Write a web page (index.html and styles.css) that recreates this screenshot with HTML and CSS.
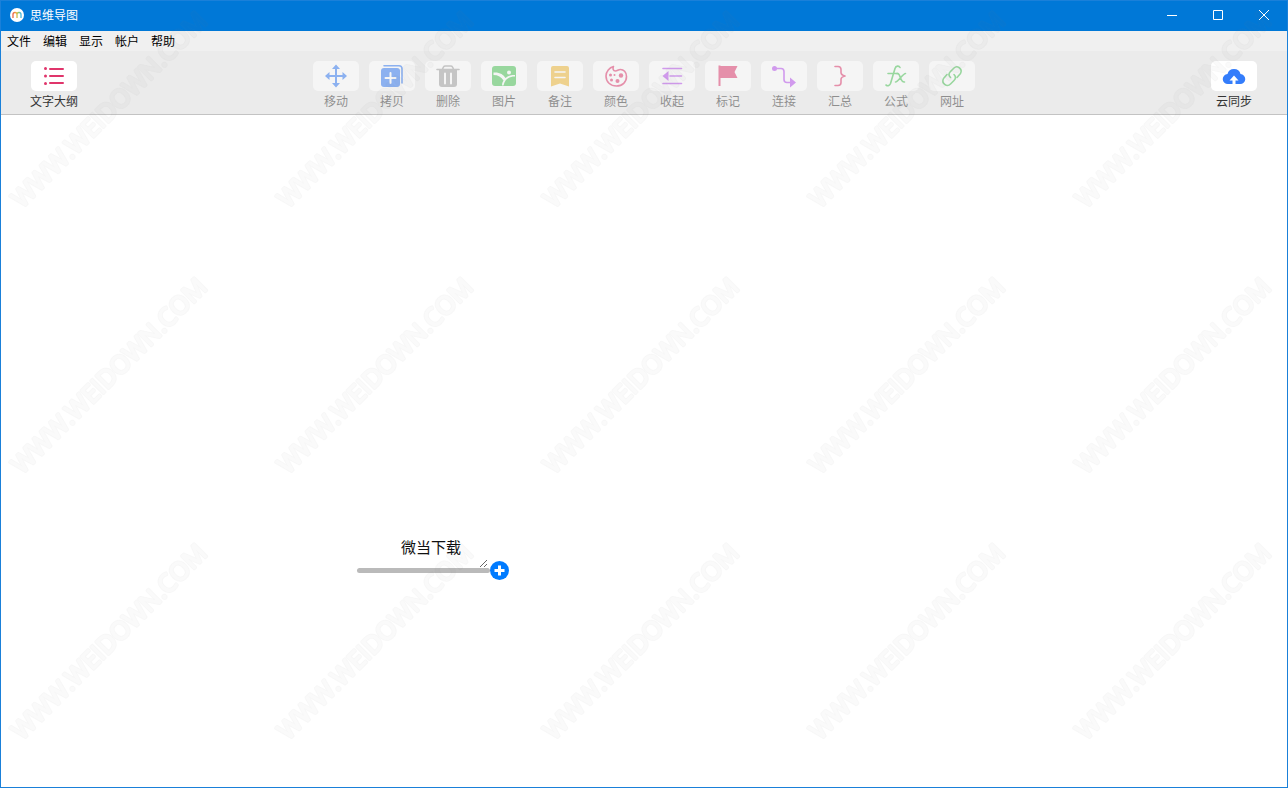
FILE: index.html
```html
<!DOCTYPE html>
<html lang="zh-CN">
<head>
<meta charset="utf-8">
<title>思维导图</title>
<link rel="stylesheet" href="styles.css">
</head>
<body>
<div class="window">
  <header class="titlebar">
    <svg class="logo" viewBox="0 0 14 14" aria-hidden="true">
      <defs>
        <linearGradient id="rainbow">
          <stop offset="0" stop-color="#e8604c"/>
          <stop offset=".4" stop-color="#f3b13c"/>
          <stop offset=".7" stop-color="#8acb6a"/>
          <stop offset="1" stop-color="#3fb4e8"/>
        </linearGradient>
      </defs>
      <circle cx="7" cy="7" r="7" fill="#fff"/>
      <path d="M3 10V6.500a2 2 0 0 1 4 0V10M7 10V6.500a2 2 0 0 1 4 0V10" fill="none" stroke="url(#rainbow)" stroke-width="1.300"/>
    </svg>
    <h1 class="title">思维导图</h1>
    <div class="controls">
      <button class="control" aria-label="最小化"><svg viewBox="0 0 12 12"><path d="M1 6.500h10"/></svg></button>
      <button class="control" aria-label="最大化"><svg viewBox="0 0 12 12"><path d="M1.500 1.500h9v9h-9z"/></svg></button>
      <button class="control" aria-label="关闭"><svg viewBox="0 0 12 12"><path d="M1 1l10 10M11 1L1 11"/></svg></button>
    </div>
  </header>

  <nav class="menubar">
    <button class="menu">文件</button>
    <button class="menu">编辑</button>
    <button class="menu">显示</button>
    <button class="menu">帐户</button>
    <button class="menu">帮助</button>
  </nav>

  <div class="toolbar">
    <div class="group">
      <button class="tool">
        <span class="tile"><svg class="icon pink" viewBox="0 0 46 30">
          <g class="fill"><circle cx="14.500" cy="7.500" r="1.500"/><circle cx="14.500" cy="15" r="1.500"/><circle cx="14.500" cy="22.500" r="1.500"/></g>
          <path class="w2" d="M19 8h13M19 15h13M19 22h13"/></svg></span>
        <span class="label">文字大纲</span>
      </button>
    </div>

    <div class="group">
      <button class="tool" disabled>
        <span class="tile"><svg class="icon blue" viewBox="0 0 46 30">
          <path class="w2" d="M23 6v18M14 15h18"/>
          <path class="fill" d="M23 3.500l4 4.500h-8zM23 26.500l4-4.500h-8zM12 15l4.500-4v8zM34 15l-4.500-4v8z"/></svg></span>
        <span class="label">移动</span>
      </button>
      <button class="tool" disabled>
        <span class="tile"><svg class="icon blue" viewBox="0 0 46 30">
          <rect class="fill" x="12" y="7" width="19" height="19" rx="3"/>
          <path d="M15 4.800h15a3 3 0 0 1 3 3V22"/>
          <path class="cut w2" d="M21.500 12v10M16.500 17h10"/></svg></span>
        <span class="label">拷贝</span>
      </button>
      <button class="tool" disabled>
        <span class="tile"><svg class="icon gray" viewBox="0 0 46 30">
          <path d="M17.500 8l1-2q.5-1 2-1h5q1.500 0 2 1l1 2M12 8.500h22"/>
          <path class="fill" d="M14 9h18v14a3 3 0 0 1-3 3H17a3 3 0 0 1-3-3z"/>
          <path class="cut w2" d="M20 12.500v10M26 12.500v10"/></svg></span>
        <span class="label">删除</span>
      </button>
      <button class="tool" disabled>
        <span class="tile"><svg class="icon green" viewBox="0 0 46 30">
          <rect class="fill" x="11" y="5" width="24" height="20" rx="3"/>
          <circle class="cut-fill" cx="28" cy="11.500" r="2"/>
          <path class="cut-fill" d="M12.500 11.500c6-.5 10 2 12 5.500c2.500-2 5-3 9.500-3v1.500c-6 0-10 2.500-11.500 9h-1.500c0-2 .5-3.500 1.500-5c-2-3.500-5.500-5.500-10-5.500z"/></svg></span>
        <span class="label">图片</span>
      </button>
      <button class="tool" disabled>
        <span class="tile"><svg class="icon yellow" viewBox="0 0 46 30">
          <path class="fill" d="M14 7a2 2 0 0 1 2-2h14a2 2 0 0 1 2 2v18.500l-9-3-9 3z"/>
          <path class="cut" d="M18 11h10M18 16.500h10"/></svg></span>
        <span class="label">备注</span>
      </button>
      <button class="tool" disabled>
        <span class="tile"><svg class="icon pink" viewBox="0 0 46 30">
          <path d="M20.500 5.500c-4 1-7.500 5-7.500 9.500c0 6 4.500 10 10.500 10c6 0 10-4 10-9.500c0-4.500-3-7-6-7c-2.500 0-3 1.500-5 1.500c-2.500 0-3-2.500-2-4.500z"/>
          <g class="fill"><circle cx="17.500" cy="14" r="1.500"/><circle cx="18.500" cy="19" r="1.500"/><circle cx="21.500" cy="14" r="1"/><circle cx="24.500" cy="20" r="2"/><circle cx="28" cy="14.500" r="2.200"/></g></svg></span>
        <span class="label">颜色</span>
      </button>
      <button class="tool" disabled>
        <span class="tile"><svg class="icon purple" viewBox="0 0 46 30">
          <path d="M14 7.500h18.500M21 15h11.500M14 22.500h18.500"/>
          <path class="fill" d="M13.500 15l6-5v10z"/></svg></span>
        <span class="label">收起</span>
      </button>
      <button class="tool" disabled>
        <span class="tile"><svg class="icon pink" viewBox="0 0 46 30">
          <path class="fill" d="M13.500 4.500h2v.5h17l-3 6 3 6h-17v8h-2z"/></svg></span>
        <span class="label">标记</span>
      </button>
      <button class="tool" disabled>
        <span class="tile"><svg class="icon purple" viewBox="0 0 46 30">
          <circle class="fill" cx="13.500" cy="7.500" r="2.500"/>
          <path d="M14 7.500h6q3 0 3 3v8q0 3 3 3h4"/>
          <path class="fill" d="M29 16.500l6 5-6 5z"/></svg></span>
        <span class="label">连接</span>
      </button>
      <button class="tool" disabled>
        <span class="tile"><svg class="icon pink" viewBox="0 0 46 30">
          <path d="M18 5.500h3q3 0 3 3v3q0 2.500 4 3.500q-4 1-4 3.500v3q0 3-3 3h-3"/></svg></span>
        <span class="label">汇总</span>
      </button>
      <button class="tool" disabled>
        <span class="tile"><svg class="icon green" viewBox="0 0 46 30">
          <path d="M27 6.500c-1-2-4-2-5 1l-4.500 15c-.8 2-2.500 3-4.500 1.500M15 12.500h10"/>
          <path d="M24 12.500c4-1 2.500 9 7.500 8.500M32.500 12.500c-2.500 0-7.500 8.500-10 8.500"/></svg></span>
        <span class="label">公式</span>
      </button>
      <button class="tool" disabled>
        <span class="tile"><svg class="icon green" viewBox="0 0 46 30">
          <path d="M21.500 16.500c-2-2-1.500-4.500 0-6l3.500-3.500c3-3 9 .5 6.500 5.500l-3.500 4"/>
          <path d="M18 13.500l-3.500 4c-2.500 5 3.500 9 7 5.500l3.500-3.500c1.500-1.500 2-4 0-6"/></svg></span>
        <span class="label">网址</span>
      </button>
    </div>

    <div class="group end">
      <button class="tool">
        <span class="tile"><svg class="icon azure" viewBox="0 0 46 30">
          <path class="fill" d="M17 23a5 5 0 0 1-.5-10a6.700 6.700 0 0 1 13 0a5 5 0 0 1-.5 10z"/>
          <path class="cut-fill" d="M23 14.500l4.500 5h-3V24h-3v-4.500h-3z"/></svg></span>
        <span class="label">云同步</span>
      </button>
    </div>
  </div>

  <main class="canvas">
    <div class="node">
      <textarea class="node-text" aria-label="主题" rows="1" spellcheck="false">微当下载</textarea>
      <div class="node-line"></div>
      <button class="add" aria-label="添加子主题"><svg viewBox="0 0 19 19"><path d="M9.500 4.500v10M4.500 9.500h10"/></svg></button>
    </div>
  </main>
</div>

<svg class="watermark" aria-hidden="true">
  <defs>
    <pattern id="mark" y="-52" width="266" height="266" patternUnits="userSpaceOnUse">
      <g transform="translate(22 261) rotate(-45)">
        <text class="mark-outer">WWW.WEIDOWN.COM</text>
        <text class="mark-inner">WWW.WEIDOWN.COM</text>
      </g>
    </pattern>
    <mask id="hollow" maskUnits="userSpaceOnUse" x="0" y="0" width="100%" height="100%">
      <rect width="100%" height="100%" fill="url(#mark)"/>
    </mask>
  </defs>
  <rect class="mark-ink" width="100%" height="100%" mask="url(#hollow)"/>
</svg>
</body>
</html>
```
FILE: styles.css
```css
* { box-sizing: border-box; }

body {
  margin: 0;
  font-family: "Noto Sans CJK SC", "Liberation Sans", sans-serif;
  font-size: 12px;
  color: #000;
}

button {
  margin: 0;
  padding: 0;
  border: 0;
  background: none;
  font: inherit;
  color: inherit;
}

.window {
  display: flex;
  flex-direction: column;
  min-height: 100vh;
  border: 1px solid #1a80d9;
  background: #fff;
}

.titlebar {
  display: flex;
  align-items: center;
  height: 30px;
  padding: 0 0 2px 9px;
  background: #0078d7;
  color: #fff;
}

.logo { width: 14px; height: 14px; }

.title {
  margin: 0 0 0 6px;
  font-size: 12px;
  font-weight: 400;
  line-height: 18px;
}

.controls { display: flex; height: 100%; margin-left: auto; }

.control {
  display: flex;
  align-items: center;
  justify-content: center;
  width: 46px;
}

.control svg {
  width: 12px;
  height: 12px;
  fill: none;
  stroke: #fff;
}

.menubar {
  display: flex;
  gap: 12px;
  height: 20px;
  padding: 0 6px;
  background: #f0f0f0;
}

.menu { line-height: 20px; }

.toolbar {
  display: grid;
  grid-template-columns: 1fr auto 1fr;
  padding: 10px 25px 4px;
  border-bottom: 1px solid #c3c3c3;
  background: #ebebeb;
}

.group { display: flex; }
.end { justify-content: flex-end; }

.tool {
  display: flex;
  flex-direction: column;
  align-items: center;
  gap: 1px;
  width: 56px;
  color: #333;
}

.tool:disabled { opacity: .5; }

.tile {
  display: block;
  width: 46px;
  height: 30px;
  border-radius: 5px;
  background: #fff;
}

.label { line-height: 18px; white-space: nowrap; }

.icon {
  display: block;
  width: 46px;
  height: 30px;
  fill: none;
  stroke: currentColor;
  stroke-width: 1.6;
  stroke-linecap: round;
  stroke-linejoin: round;
}

.icon .fill { fill: currentColor; stroke: none; }
.icon .cut { stroke: #fff; }
.icon .cut-fill { fill: #fff; stroke: none; }
.icon .w2 { stroke-width: 2; }

.pink { color: #e0356b; }
.blue { color: #2f78f5; }
.azure { color: #347dfb; }
.gray { color: #a0a0a0; }
.green { color: #48c454; }
.yellow { color: #f2b932; }
.purple { color: #b84cf0; }

.canvas { position: relative; flex: 1; }

.node {
  position: absolute;
  left: 356px;
  top: 421px;
  width: 133px;
}

.node-text {
  display: block;
  width: 114px;
  height: 32px;
  margin-left: 17px;
  padding: 0;
  border: 0;
  outline: 0;
  overflow: hidden;
  resize: both;
  background: none;
  font: 15px/22px "Noto Sans CJK SC", "Liberation Sans", sans-serif;
  text-align: center;
  color: #111;
}

.node-line {
  height: 5px;
  border-radius: 3px;
  background: #bababa;
}

.add {
  position: absolute;
  right: -19px;
  bottom: -7px;
  width: 19px;
  height: 19px;
  border-radius: 50%;
  background: #007bff;
}

.add svg {
  display: block;
  fill: none;
  stroke: #fff;
  stroke-width: 3;
}

.watermark {
  position: fixed;
  inset: 0;
  width: 100%;
  height: 100%;
  pointer-events: none;
}

.mark-outer,
.mark-inner {
  font: 25px "Open Sans", sans-serif;
  stroke-linejoin: round;
}

.mark-outer { fill: #fff; stroke: #fff; stroke-width: 3; }
.mark-inner { fill: #999; stroke: #999; stroke-width: 1; }
.mark-ink { fill: #777; fill-opacity: .06; }
```
